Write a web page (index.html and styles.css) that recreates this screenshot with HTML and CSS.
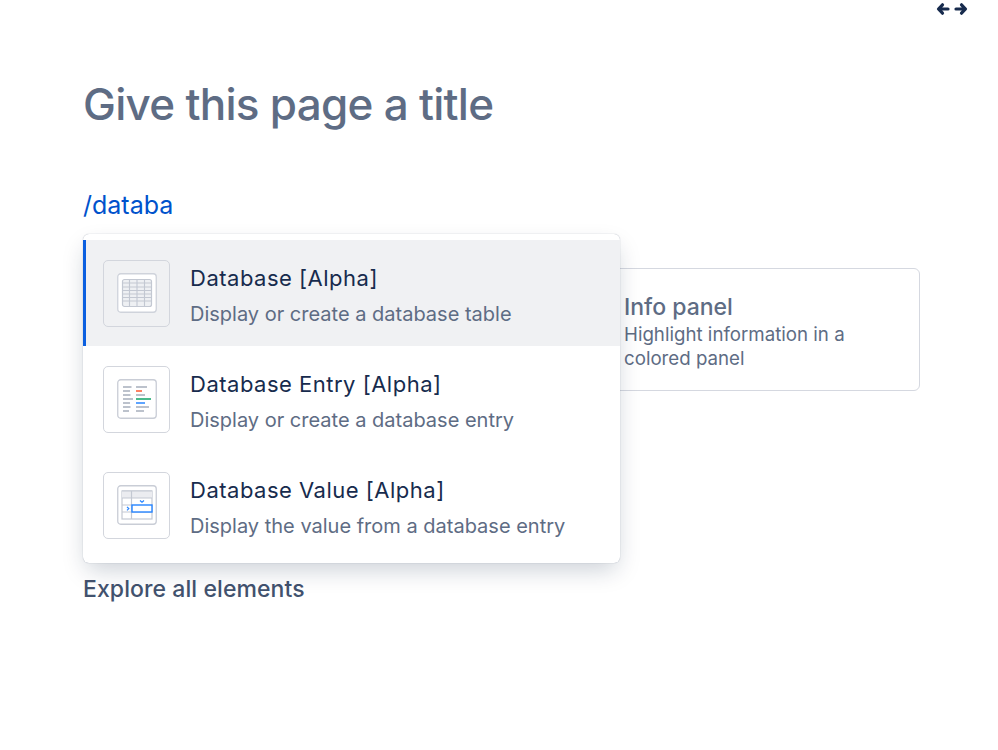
FILE: index.html
```
<!DOCTYPE html>
<html lang="en">
<head>
<meta charset="utf-8">
<title>Give this page a title</title>
<link rel="stylesheet" href="styles.css">
</head>
<body>
<header class="topbar">
  <svg class="arrows" width="32" height="14" viewBox="0 0 32 14" aria-hidden="true">
    <path d="M6.500 2.800 2.500 7 6.500 11.200M3 7h9M25.500 2.800 29.500 7 25.500 11.200M29 7h-9" fill="none" stroke="#172b4d" stroke-width="3.200" stroke-linecap="round" stroke-linejoin="round"/>
  </svg>
</header>
<main class="page">
  <h1 class="title">Give this page a title</h1>
  <p class="typed">/databa</p>
  <div class="stage">
    <section class="panel-card">
      <h2 class="panel-name">Info panel</h2>
      <p class="panel-desc">Highlight information in a<br>colored panel</p>
    </section>
    <ul class="menu">
      <li class="item item-active">
        <span class="tile">
          <svg class="glyph" width="40" height="40" viewBox="0 0 40 40" aria-hidden="true">
            <rect x=".75" y=".75" width="38.500" height="38.500" rx="3" fill="#fff" stroke="#cfd3db" stroke-width="1.300"/>
            <rect x="5.500" y="6.500" width="29" height="27" rx="2" fill="#eef0f3" stroke="#c3c8d2" stroke-width="1.200"/>
            <path d="M5.500 10h29M5.500 14h29M5.500 17.500h29M5.500 21h29M5.500 24.500h29M5.500 28h29M12.500 6.500v27M20 6.500v27M27.500 6.500v27" stroke="#c3c8d2" stroke-width="1.100" fill="none"/>
          </svg>
        </span>
        <span class="copy">
          <span class="name">Database [Alpha]</span>
          <span class="desc">Display or create a database table</span>
        </span>
      </li>
      <li class="item">
        <span class="tile">
          <svg class="glyph" width="40" height="40" viewBox="0 0 40 40" aria-hidden="true">
            <rect x=".75" y=".75" width="38.500" height="38.500" rx="3" fill="#fff" stroke="#c9cdd6" stroke-width="1.300"/>
            <g stroke-width="1.800" fill="none">
              <path d="M6 8h8.500M6 12h7M6 16h7.500M6 20h10M6 24h7M6 28h7.500M6 32h6M19 8h11M19 16h9M19 28h13M19 32h8" stroke="#bcc2cc"/>
              <path d="M19 12h6" stroke="#ff7452"/>
              <path d="M19 20h15" stroke="#36b37e"/>
              <path d="M19 24h9" stroke="#4c9aff"/>
            </g>
          </svg>
        </span>
        <span class="copy">
          <span class="name">Database Entry [Alpha]</span>
          <span class="desc">Display or create a database entry</span>
        </span>
      </li>
      <li class="item">
        <span class="tile">
          <svg class="glyph" width="40" height="40" viewBox="0 0 40 40" aria-hidden="true">
            <rect x=".75" y=".75" width="38.500" height="38.500" rx="3" fill="#fff" stroke="#c9cdd6" stroke-width="1.300"/>
            <rect x="5" y="6" width="30" height="28" fill="#fff" stroke="#c3c8d2" stroke-width="1.200"/>
            <rect x="5" y="6" width="30" height="7" fill="#ebecf0"/>
            <path d="M5 13h30M5 20h9M5 27h30M5 6h30M14.500 6v28" stroke="#c3c8d2" stroke-width="1.200" fill="none"/>
            <rect x="15" y="20" width="20" height="7" fill="#fff" stroke="#2684ff" stroke-width="1.400"/>
            <path d="M23 15.500l2 1.800 2-1.800M10 21.800l1.800 1.800-1.800 1.800" stroke="#2684ff" stroke-width="1.200" fill="none"/>
          </svg>
        </span>
        <span class="copy">
          <span class="name">Database Value [Alpha]</span>
          <span class="desc">Display the value from a database entry</span>
        </span>
      </li>
    </ul>
  </div>
  <a class="explore" href="#">Explore all elements</a>
</main>
</body>
</html>
```
FILE: styles.css
```
* { box-sizing: border-box; }
html, body { margin: 0; padding: 0; }
body {
  width: 998px;
  height: 750px;
  overflow: hidden;
  background: #fff;
  font-family: Inter, "Liberation Sans", sans-serif;
}
.topbar {
  display: flex;
  justify-content: flex-end;
  height: 18px;
  padding: 2px 30px 0 0;
}
.arrows { display: block; }
.page { padding: 0 78px 0 83px; }
.title {
  margin: 54px 0 0;
  font-size: 44px;
  line-height: 64px;
  font-weight: 500;
  letter-spacing: -0.72px;
  color: #5e6c84;
}
.typed {
  margin: 52px 0 12px;
  font-size: 25px;
  line-height: 34px;
  color: #0052cc;
}
.stage {
  position: relative;
  display: flex;
  justify-content: flex-end;
  height: 340px;
  padding-top: 12px;
}
.panel-card {
  position: relative;
  width: 400px;
  height: 123px;
  margin-top: 22px;
  padding: 23px 0 0 103px;
  border: 1.500px solid #d5d8e0;
  border-radius: 6px;
}
.panel-name {
  margin: 0;
  font-size: 23px;
  line-height: 31px;
  font-weight: 500;
  color: #5e6c84;
}
.panel-desc {
  margin: 0;
  font-size: 18.700px;
  line-height: 24px;
  color: #5e6c84;
}
.menu {
  position: absolute;
  left: 0;
  top: 0;
  width: 537px;
  height: 329px;
  margin: 0;
  padding: 6px 0 0;
  list-style: none;
  background: #fff;
  border-radius: 6px;
  box-shadow: 0 0 1px rgba(9, 30, 66, .4), 0 10px 24px -4px rgba(9, 30, 66, .22);
}
.item {
  display: flex;
  align-items: center;
  gap: 20px;
  height: 106px;
  padding-left: 20px;
}
.item-active {
  padding-left: 17px;
  border-left: 3px solid #0b5fe0;
  background: #f0f1f3;
}
.tile {
  display: flex;
  align-items: center;
  justify-content: center;
  flex: none;
  width: 67px;
  height: 67px;
  border: 1.500px solid #d3d6dd;
  border-radius: 5px;
}
.glyph { display: block; }
.copy { display: flex; flex-direction: column; gap: 9px; padding-top: 6px; }
.name {
  font-size: 22px;
  line-height: 27px;
  letter-spacing: .5px;
  color: #172b4d;
}
.desc {
  font-size: 20px;
  line-height: 26px;
  color: #5e6c84;
}
.explore {
  display: block;
  font-size: 23px;
  line-height: 30px;
  font-weight: 500;
  letter-spacing: .08px;
  color: #42526e;
  text-decoration: none;
}
```
